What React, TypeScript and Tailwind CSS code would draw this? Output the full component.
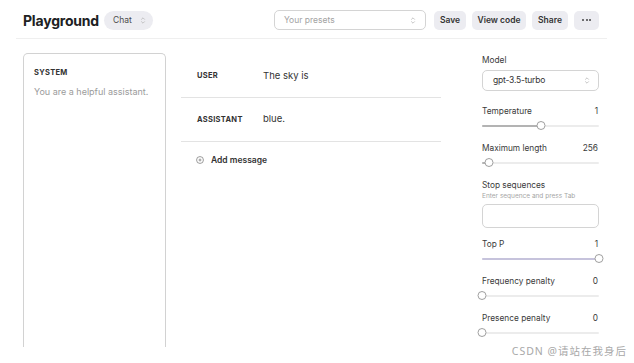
import React from "react";

const font = { fontFamily: "Inter, 'Noto Sans', sans-serif" };

function Updown({ className = "" }: { className?: string }) {
  return (
    <svg viewBox="0 0 10 14" className={className} fill="none" stroke="currentColor" strokeWidth="1.3" strokeLinecap="round" strokeLinejoin="round">
      <path d="M2.5 5 L5 2.5 L7.5 5" />
      <path d="M2.5 9 L5 11.5 L7.5 9" />
    </svg>
  );
}

function Slider({ pct, fill = "bg-[#b3b3b3]" }: { pct: number; fill?: string }) {
  return (
    <div className="relative h-[9px] w-full flex items-center">
      <div className="h-[2px] w-full rounded-full bg-[#ececec]" />
      <div className={`absolute left-0 h-[2px] rounded-full ${fill}`} style={{ width: `${pct}%` }} />
      <div
        className="absolute size-[9px] rounded-full border border-[#a0a0a0] bg-white -translate-x-1/2"
        style={{ left: `${pct}%` }}
      />
    </div>
  );
}

function Param({ label, value, pct, fill }: { label: string; value: string; pct: number; fill?: string }) {
  return (
    <div className="flex flex-col gap-[3px]">
      <div className="flex justify-between text-[8.3px] text-[#3a3a3a] leading-[13px]">
        <span>{label}</span>
        <span className="pr-[1px]">{value}</span>
      </div>
      <Slider pct={pct} fill={fill} />
    </div>
  );
}

export default function App() {
  return (
    <div className="relative w-[634px] h-[363px] bg-white overflow-hidden text-[#202123]" style={font}>
      {/* header */}
      <div className="mx-[16px] w-[591px] h-[39px] border-b border-[#efefef] flex items-center pt-[2px] pl-[7px] pr-[8px]">
        <div className="text-[14px] font-bold tracking-[-0.2px]">Playground</div>
        <div className="ml-[5px] h-[19px] w-[49px] rounded-full bg-[#ececf1] flex items-center pl-[9px] gap-[8px] text-[8.5px] text-[#4a4a4a]">
          Chat
          <Updown className="w-[6px] h-[9px] text-[#b5b5b5]" />
        </div>
        <div className="ml-auto h-[20px] w-[152px] rounded-[5px] border border-[#d4d4d4] flex items-center justify-between px-[9px] text-[8.5px] text-[#a3a3a3]">
          Your presets
          <Updown className="w-[6px] h-[9px] text-[#b5b5b5]" />
        </div>
        <div className="ml-[8px] flex gap-[6px] text-[8.5px] font-semibold text-[#333]">
          <div className="h-[19px] w-[32px] rounded-[5px] bg-[#ececf1] flex items-center justify-center">Save</div>
          <div className="h-[19px] w-[54px] rounded-[5px] bg-[#ececf1] flex items-center justify-center">View code</div>
          <div className="h-[19px] w-[36px] rounded-[5px] bg-[#ececf1] flex items-center justify-center">Share</div>
          <div className="h-[19px] w-[25px] rounded-[5px] bg-[#ececf1] flex items-center justify-center gap-[1.5px]">
            <span className="size-[2px] rounded-full bg-[#444]" />
            <span className="size-[2px] rounded-full bg-[#444]" />
            <span className="size-[2px] rounded-full bg-[#444]" />
          </div>
        </div>
      </div>

      {/* body */}
      <div className="flex pl-[23px] pt-[14px]">
        <div className="w-[143px] h-[294px] rounded-t-[5px] border border-b-0 border-[#d2d2d2] px-[10px] pt-[13px]">
          <div className="text-[7.5px] font-bold tracking-[0.3px] text-[#333]">SYSTEM</div>
          <div className="mt-[7px] text-[9px] text-[#9b9b9b]">You are a helpful assistant.</div>
        </div>

        <div className="ml-[15px] w-[260px] flex flex-col">
          <div className="h-[45px] border-b border-[#e3e3e3] flex items-center pl-[16px] pt-[2px]">
            <span className="w-[66px] text-[7.5px] font-bold tracking-[0.3px] text-[#333]">USER</span>
            <span className="text-[9.5px] text-[#333]">The sky is</span>
          </div>
          <div className="h-[44px] border-b border-[#e3e3e3] flex items-center pl-[16px]">
            <span className="w-[66px] text-[7.5px] font-bold tracking-[0.3px] text-[#333]">ASSISTANT</span>
            <span className="text-[9.5px] text-[#333]">blue.</span>
          </div>
          <div className="h-[35px] flex items-center pl-[15px] gap-[7px] pt-[1px]">
            <svg viewBox="0 0 10 10" className="w-[8px] h-[8px] text-[#777]" fill="none" stroke="currentColor" strokeWidth="0.9">
              <circle cx="5" cy="5" r="4.3" />
              <path d="M5 3.2 V6.8 M3.2 5 H6.8" />
            </svg>
            <span className="text-[8.5px] font-semibold text-[#333]">Add message</span>
          </div>
        </div>

        <div className="ml-[41px] w-[117px] flex flex-col mt-[1px]">
          <div className="text-[8.3px] text-[#3a3a3a] leading-[13px]">Model</div>
          <div className="mt-[3px] h-[21px] rounded-[5px] border border-[#d4d4d4] flex items-center justify-between pl-[10px] pr-[8px] text-[8.5px] tracking-[-0.2px] text-[#333]">
            gpt-3.5-turbo
            <Updown className="w-[6px] h-[9px] text-[#b5b5b5]" />
          </div>
          <div className="mt-[14px]">
            <Param label="Temperature" value="1" pct={50} />
          </div>
          <div className="mt-[12px]">
            <Param label="Maximum length" value="256" pct={6} />
          </div>
          <div className="mt-[12px] text-[8.3px] text-[#3a3a3a] leading-[12px]">Stop sequences</div>
          <div className="mt-[1px] text-[6.5px] text-[#a5a5a5] leading-[8px]">Enter sequence and press Tab</div>
          <div className="mt-[4px] h-[24px] rounded-[5px] border border-[#d4d4d4]" />
          <div className="mt-[10px]">
            <Param label="Top P" value="1" pct={100} fill="bg-[#c6c3dc]" />
          </div>
          <div className="mt-[12px]">
            <Param label="Frequency penalty" value="0" pct={0} />
          </div>
          <div className="mt-[12px]">
            <Param label="Presence penalty" value="0" pct={0} />
          </div>
        </div>
      </div>

      {/* watermark */}
      <div
        className="absolute right-[7px] bottom-[3px] text-[10.5px] text-[#a8a8a8] tracking-[1px]"
        style={{ fontFamily: "'Noto Sans', 'Noto Sans CJK SC', sans-serif" }}
      >
        CSDN @请站在我身后
      </div>
    </div>
  );
}
